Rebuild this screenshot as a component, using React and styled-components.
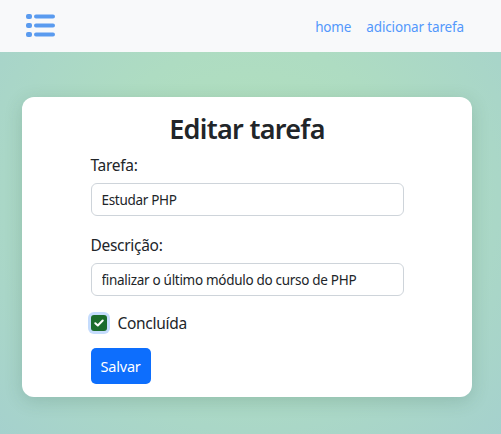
import React from "react";
import styled, { createGlobalStyle } from "styled-components";

const Global = createGlobalStyle`
  html, body { margin: 0; padding: 0; }
  body {
    font-family: "Noto Sans", "Liberation Sans", sans-serif;
    color: #212529;
    min-height: 100vh;
    background: radial-gradient(ellipse at 50% 45%, #b3e1bc 0%, #aedcc2 45%, #a5d1cd 100%);
  }
`;

const Navbar = styled.nav`
  height: 52px;
  background: #f8f9fa;
  display: flex;
  align-items: center;
  justify-content: space-between;
  padding: 0 37px 0 26px;
`;

const NavLinks = styled.div`
  display: flex;
  gap: 15px;
  padding-top: 1px;
`;

const NavLink = styled.a`
  font-size: 13.5px;
  letter-spacing: -0.15px;
  color: #5398fc;
  text-decoration: none;
`;

const Main = styled.main`
  padding: 45px 29px 37px 22px;
`;

const Card = styled.section`
  background: #fff;
  border-radius: 12px;
  box-shadow: 0 4px 18px rgba(40, 80, 60, 0.18);
  padding: 15px 0 13px;
  display: flex;
  flex-direction: column;
  align-items: center;
`;

const Title = styled.h1`
  margin: 0;
  font-size: 27px;
  line-height: 34px;
  letter-spacing: -0.7px;
  font-weight: 600;
`;

const Form = styled.form`
  width: 313px;
  display: flex;
  flex-direction: column;
  margin-top: 7px;
`;

const Label = styled.label`
  font-size: 15.5px;
  letter-spacing: -0.3px;
  line-height: 24px;
  margin-bottom: 6px;
`;

const Input = styled.input`
  box-sizing: border-box;
  height: 33px;
  width: 100%;
  border: 1px solid #ced4da;
  border-radius: 6px;
  padding: 0 10px;
  font-family: inherit;
  font-size: 13.5px;
  letter-spacing: -0.3px;
  color: #212529;
  margin-bottom: ${(p) => p.$mb || 0}px;
  outline: none;
`;

const CheckRow = styled.div`
  display: flex;
  align-items: center;
  height: 24px;
  gap: 11px;
  margin-bottom: 13px;
`;

const CheckBox = styled.span`
  width: 16px;
  height: 16px;
  border-radius: 3px;
  background: #1b6c2c;
  box-shadow: 0 0 0 3px #c5dcfd;
  display: flex;
  align-items: center;
  justify-content: center;
`;

const CheckLabel = styled.span`
  font-size: 15.5px;
  letter-spacing: -0.3px;
`;

const Button = styled.button`
  align-self: flex-start;
  background: #0d6efd;
  color: #fff;
  border: none;
  border-radius: 5px;
  height: 36px;
  padding: 0 10px;
  font-family: inherit;
  font-size: 14.5px;
  letter-spacing: -0.2px;
`;

const Icon = () => (
  <svg width="30" height="26" viewBox="0 0 30 26">
    <g fill="#5a9bef">
      <rect x="0" y="1" width="6" height="5" rx="2" />
      <rect x="0" y="10" width="6" height="5" rx="2" />
      <rect x="0" y="19" width="6" height="5" rx="2" />
    </g>
    <g stroke="#5a9bef" strokeWidth="4" strokeLinecap="round">
      <line x1="10" y1="3.5" x2="27" y2="3.5" />
      <line x1="10" y1="12.5" x2="27" y2="12.5" />
      <line x1="10" y1="21.5" x2="27" y2="21.5" />
    </g>
  </svg>
);

export default function App() {
  return (
    <>
      <Global />
      <Navbar>
        <Icon />
        <NavLinks>
          <NavLink href="#">home</NavLink>
          <NavLink href="#">adicionar tarefa</NavLink>
        </NavLinks>
      </Navbar>
      <Main>
        <Card>
          <Title>Editar tarefa</Title>
          <Form onSubmit={(e) => e.preventDefault()}>
            <Label>Tarefa:</Label>
            <Input defaultValue="Estudar PHP" $mb={17} />
            <Label>Descrição:</Label>
            <Input defaultValue="finalizar o último módulo do curso de PHP" $mb={15} />
            <CheckRow>
              <CheckBox>
                <svg width="10" height="8" viewBox="0 0 10 8">
                  <path d="M1.3 4.2 L3.8 6.5 L8.7 1.5" fill="none" stroke="#fff" strokeWidth="2" strokeLinecap="round" strokeLinejoin="round" />
                </svg>
              </CheckBox>
              <CheckLabel>Concluída</CheckLabel>
            </CheckRow>
            <Button type="submit">Salvar</Button>
          </Form>
        </Card>
      </Main>
    </>
  );
}
